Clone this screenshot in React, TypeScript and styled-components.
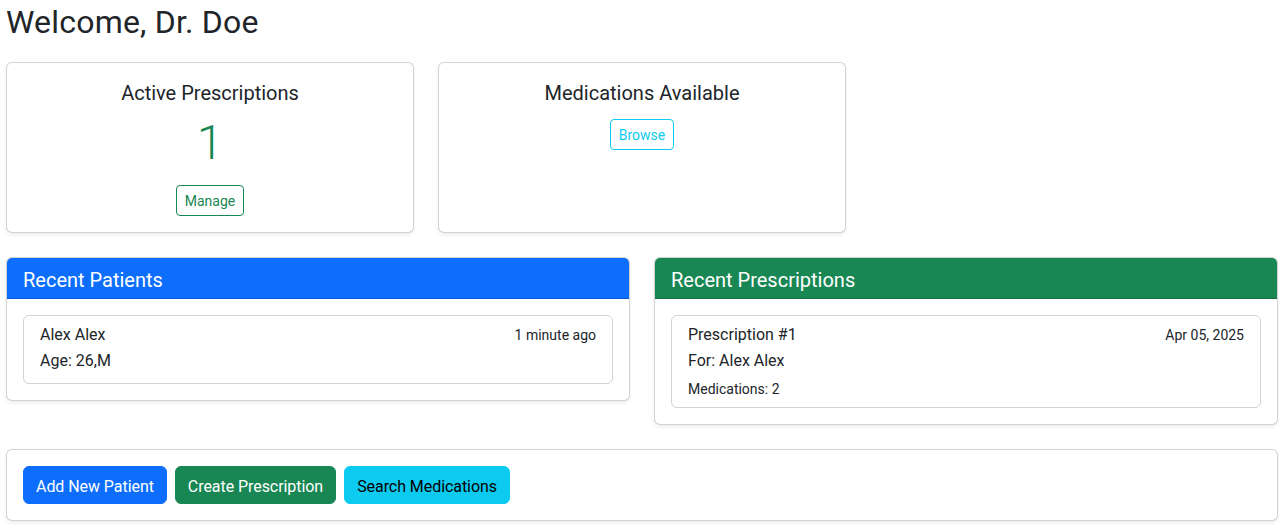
import React from "react";
import styled, { createGlobalStyle } from "styled-components";

const Global = createGlobalStyle`
  html, body { margin: 0; padding: 0; background: #fff; }
  body {
    font-family: Roboto, "Liberation Sans", Arial, sans-serif;
    font-size: 16px;
    line-height: 1.5;
    color: #212529;
  }
  * { box-sizing: border-box; }
`;

const Page = styled.div`
  padding: 0 6px;
`;

const Welcome = styled.h2`
  margin: 0 0 21px;
  padding-top: 3px;
  font-size: 32px;
  font-weight: 400;
  line-height: 1.2;
  letter-spacing: 0.2px;
`;

const Row = styled.div<{ $cols: number; $stretch?: boolean }>`
  display: grid;
  grid-template-columns: repeat(${(p) => p.$cols}, 1fr);
  column-gap: 24px;
  align-items: ${(p) => (p.$stretch ? "stretch" : "start")};
  margin-bottom: 24px;
`;

const Card = styled.div`
  background: #fff;
  border: 1px solid rgba(0, 0, 0, 0.175);
  border-radius: 6px;
  box-shadow: 0 2px 4px rgba(0, 0, 0, 0.075);
  overflow: hidden;
`;

const CardBody = styled.div<{ $center?: boolean }>`
  padding: 16px;
  text-align: ${(p) => (p.$center ? "center" : "left")};
`;

const CardTitle = styled.h5<{ $mb: number }>`
  margin: 0 0 ${(p) => p.$mb}px;
  padding-top: 2px;
  font-size: 20px;
  font-weight: 400;
  line-height: 1.2;
`;

const BigNumber = styled.p`
  margin: 0 0 13px;
  padding-top: 3px;
  font-size: 48px;
  font-weight: 300;
  line-height: 1.2;
  color: #198754;
`;

const OutlineButton = styled.button<{ $color: string }>`
  display: inline-block;
  font-family: inherit;
  font-size: 14px;
  line-height: 1.5;
  padding: 5px 8px 3px;
  border-radius: 4px;
  background: transparent;
  color: ${(p) => p.$color};
  border: 1px solid ${(p) => p.$color};
  cursor: pointer;
`;

const CardHeader = styled.div<{ $bg: string }>`
  background: ${(p) => p.$bg};
  color: #fff;
  padding: 10px 16px 6px;
  border-bottom: 1px solid rgba(0, 0, 0, 0.175);
`;

const HeaderTitle = styled.h5`
  margin: 0;
  font-size: 20px;
  font-weight: 400;
  line-height: 1.2;
`;

const ListItem = styled.div`
  border: 1px solid rgba(0, 0, 0, 0.175);
  border-radius: 6px;
  padding: 9px 16px 6px;
`;

const ItemHead = styled.div`
  display: flex;
  justify-content: space-between;
  align-items: flex-start;
  margin-bottom: 4px;
`;

const ItemName = styled.h6`
  margin: 0;
  font-size: 16px;
  font-weight: 400;
  line-height: 1.2;
`;

const SmallText = styled.small`
  font-size: 14px;
  line-height: 19.2px;
  padding-top: 1px;
`;

const ItemLine = styled.p`
  margin: 0 0 4px;
`;

const ItemSmallLine = styled.div`
  font-size: 14px;
  line-height: 24px;
`;

const ActionBar = styled.div`
  display: flex;
  gap: 8px;
`;

const SolidButton = styled.button<{ $bg: string; $fg: string }>`
  font-family: inherit;
  font-size: 16px;
  line-height: 1.5;
  padding: 8px 12px 4px;
  border-radius: 6px;
  border: 1px solid ${(p) => p.$bg};
  background: ${(p) => p.$bg};
  color: ${(p) => p.$fg};
  letter-spacing: -0.06px;
  cursor: pointer;
`;

export default function App() {
  return (
    <>
      <Global />
      <Page>
        <Welcome>Welcome, Dr. Doe</Welcome>

        <Row $cols={3} $stretch>
          <Card>
            <CardBody $center>
              <CardTitle $mb={6}>Active Prescriptions</CardTitle>
              <BigNumber>1</BigNumber>
              <OutlineButton $color="#198754">Manage</OutlineButton>
            </CardBody>
          </Card>
          <Card>
            <CardBody $center>
              <CardTitle $mb={14}>Medications Available</CardTitle>
              <OutlineButton $color="#0dcaf0">Browse</OutlineButton>
            </CardBody>
          </Card>
        </Row>

        <Row $cols={2}>
          <Card>
            <CardHeader $bg="#0d6efd">
              <HeaderTitle>Recent Patients</HeaderTitle>
            </CardHeader>
            <CardBody>
              <ListItem>
                <ItemHead>
                  <ItemName>Alex Alex</ItemName>
                  <SmallText>1 minute ago</SmallText>
                </ItemHead>
                <ItemLine>Age: 26,M</ItemLine>
              </ListItem>
            </CardBody>
          </Card>
          <Card>
            <CardHeader $bg="#198754">
              <HeaderTitle>Recent Prescriptions</HeaderTitle>
            </CardHeader>
            <CardBody>
              <ListItem>
                <ItemHead>
                  <ItemName>Prescription #1</ItemName>
                  <SmallText>Apr 05, 2025</SmallText>
                </ItemHead>
                <ItemLine>For: Alex Alex</ItemLine>
                <ItemSmallLine>Medications: 2</ItemSmallLine>
              </ListItem>
            </CardBody>
          </Card>
        </Row>

        <Row $cols={1}>
          <Card>
            <CardBody>
              <ActionBar>
                <SolidButton $bg="#0d6efd" $fg="#fff">Add New Patient</SolidButton>
                <SolidButton $bg="#198754" $fg="#fff">Create Prescription</SolidButton>
                <SolidButton $bg="#0dcaf0" $fg="#000">Search Medications</SolidButton>
              </ActionBar>
            </CardBody>
          </Card>
        </Row>
      </Page>
    </>
  );
}
